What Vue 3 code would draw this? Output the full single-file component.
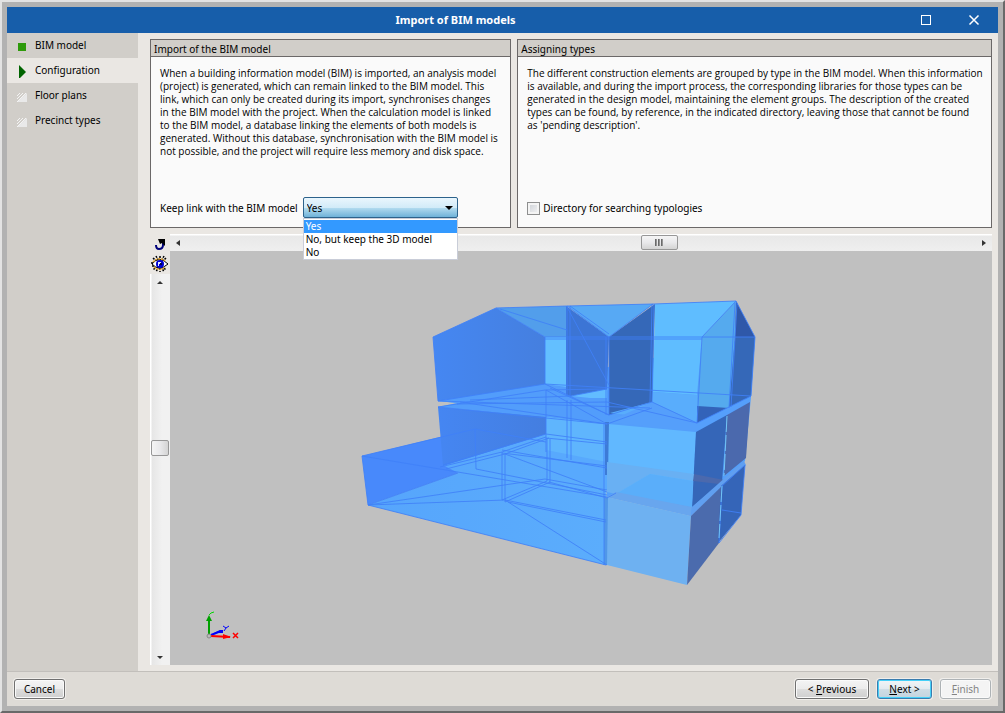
<script setup>
import { ref } from 'vue'

const steps = [
  { label: 'BIM model', state: 'done' },
  { label: 'Configuration', state: 'current' },
  { label: 'Floor plans', state: 'pending' },
  { label: 'Precinct types', state: 'pending' }
]
const importText = [
  'When a building information model (BIM) is imported, an analysis model',
  '(project) is generated, which can remain linked to the BIM model. This',
  'link, which can only be created during its import, synchronises changes',
  'in the BIM model with the project. When the calculation model is linked',
  'to the BIM model, a database linking the elements of both models is',
  'generated. Without this database, synchronisation with the BIM model is',
  'not possible, and the project will require less memory and disk space.'
]
const typesText = [
  'The different construction elements are grouped by type in the BIM model. When this information',
  'is available, and during the import process, the corresponding libraries for those types can be',
  'generated in the design model, maintaining the element groups. The description of the created',
  'types can be found, by reference, in the indicated directory, leaving those that cannot be found',
  "as 'pending description'."
]
const options = ['Yes', 'No, but keep the 3D model', 'No']
const link = ref('Yes')
const searchDirectory = ref(false)

const faces = [
  ['438,401 545,380 755,337 751,397 745,461 722,484 691,516 607,497 607,424 457,403', '#549ffb'],
  ['362,456 440,437 470,430 546,434 458,473 368,505', '#4889fb'],
  ['368,505 458,473 443,465 546,434 607,440 606,565', 'url(#ground)'],
  ['438,401 545,384 570,382 652,402 697,423 607,424 546,418 438,407 457,403', '#529dfb'],
  ['438,407 546,417 546,434 443,466', 'url(#wallMid)'],
  ['546,417 607,424 607,466 546,452', '#5fb5fd'],
  ['546,434 607,444 607,490 546,470', '#58a9fd'],
  ['546,417 607,424 607,462 546,450', '#5fb5fd'],
  ['433,337 496,308 545,337 545,384 438,401', 'url(#wallTop)'],
  ['496,308 567,306 567,337 545,337', '#529eeb'],
  ['545,337 567,337 567,387 545,384', '#63bfff'],
  ['566,306 609,337 607,389 571,396 566,395', '#3c75d5'],
  ['571,396 607,389 607,398 590,398', '#62bcff'],
  ['567,306 653,304 609,337', '#57a9f4'],
  ['609,337 655,304 652,402 609,415', '#3568b8'],
  ['655,304 736,301 702,337 697,395 653,392', '#5fbdff'],
  ['653,392 697,395 697,423 610,413 652,402', '#59adfc'],
  ['736,301 702,337 697,407 729,408 735,337', '#55aaee'],
  ['736,301 755,337 735,337', '#2f58a9'],
  ['735,337 755,337 751,396 729,408', '#3568b8'],
  ['697,406 729,408 697,423', '#3363b9'],
  ['607,422 652,402 697,423 745,399 750,402 696,432', '#559ffb'],
  ['608,424 696,432 692,507 607,490', '#61b8ff'],
  ['605,422 609,422 608,475 605,475', '#3d7bd6'],
  ['696,432 727,415 722,482 692,507', '#3566b8'],
  ['727,415 750,402 746,458 724,476', '#4b69ad'],
  ['607,462 694,474 694,481 650,474 616,494 607,492', '#69b0f3'],
  ['650,474 693,481 692,507 616,494', '#5aaefa'],
  ['607,497 616,492 692,507 691,516', '#68a6ee'],
  ['694,474 724,480 719,484 693,481', '#4b69ad'],
  ['692,507 744,461 746,465 691,516', '#609ff0'],
  ['607,497 691,516 687,585 607,565', '#6eb1f1'],
  ['604,498 608,497 607,565 604,564', '#5097e8'],
  ['691,516 722,486 719,543 687,585', '#4b6bad'],
  ['721,486 745,465 741,515 718,543', '#3565b8']
]
const edges = [
  '433,337 496,308 567,306 653,304 736,301 755,337 751,396 697,423 652,402',
  '433,337 438,401 545,384', '545,337 755,337', '496,308 545,337 545,384',
  '500,309 567,330', '567,306 567,396', '570,306 570,396',
  '567,306 609,337 653,304', '570,306 609,334', '567,307 609,385', '609,337 609,415',
  '606,337 606,415', '545,339 702,339', '736,301 702,337 697,423', '735,303 729,408',
  '737,303 731,407', '654,304 652,402', '652,304 650,402',
  '545,384 751,396', '545,384 609,415 652,402', '438,407 545,390 607,389',
  '438,401 650,408', '457,404 607,402 697,423', '470,400 571,396 607,389', '460,402 607,424',
  '438,407 546,418 607,424', '546,390 546,452', '567,400 567,458', '571,400 571,460',
  '546,390 607,424 652,408', '550,388 609,415',
  '443,465 546,434', '362,456 475,429 546,442', '362,456 368,505 606,565',
  '362,456 607,497', '368,505 545,479 607,490', '368,505 505,500 607,565',
  '368,505 458,473', '475,429 476,469', '440,467 502,452 546,437', '446,469 505,454 549,438',
  '502,452 502,500', '505,454 505,502', '547,438 547,481', '550,439 550,482',
  '502,500 547,481', '505,502 550,482', '505,500 606,520', '508,502 606,522',
  '502,450 607,468', '502,453 607,466', '476,469 607,495',
  '505,454 607,492', '549,482 607,498 616,493',
  '546,434 607,442', '546,438 607,444', '604,424 604,565',
  '722,486 745,465 741,515 719,543 722,486', '722,510 741,513'
]
</script>

<template>
  <div class="window">
    <header class="titlebar">
      <h1>Import of BIM models</h1>
      <div class="window-buttons">
        <button type="button" aria-label="Maximize">
          <svg width="12" height="12" viewBox="0 0 12 12"><rect x="1.5" y="1.5" width="9" height="9" fill="none" stroke="#fff" /></svg>
        </button>
        <button type="button" aria-label="Close">
          <svg width="12" height="12" viewBox="0 0 12 12"><path d="M1.5 1.5l9 9M10.5 1.5l-9 9" stroke="#fff" stroke-width="1.500" /></svg>
        </button>
      </div>
    </header>

    <div class="body">
      <nav class="steps">
        <a v-for="step in steps" :key="step.label" href="#" class="step" :class="step.state">
          <svg v-if="step.state === 'done'" width="12" height="14" viewBox="0 0 12 14"><path d="M2 4h8v8H2z" fill="#2e9a0a" /></svg>
          <svg v-else-if="step.state === 'current'" width="12" height="14" viewBox="0 0 12 14"><path d="M3 1l7 7-7 7z" fill="#006400" /></svg>
          <svg v-else width="12" height="14" viewBox="0 0 12 14">
            <path d="M11 4v9H1z" fill="#e9e9e9" />
            <path d="M1 7l3-3M1 10l6-6M1 13l9-9" stroke="#f4f4f4" />
          </svg>
          <span>{{ step.label }}</span>
        </a>
      </nav>

      <main class="content">
        <div class="panels">
          <section class="panel import-panel">
            <h2>Import of the BIM model</h2>
            <div class="panel-body">
              <p><span v-for="line in importText" :key="line">{{ line }}</span></p>
              <div class="field">
                <label for="keep-link">Keep link with the BIM model</label>
                <div class="combo">
                  <select id="keep-link" v-model="link">
                    <option v-for="o in options" :key="o">{{ o }}</option>
                  </select>
                  <svg class="caret" width="8" height="4" viewBox="0 0 8 4"><path d="M0 0h8L4 4z" fill="#000" /></svg>
                  <ul class="menu" role="listbox" aria-label="Keep link with the BIM model">
                    <li v-for="o in options" :key="o" role="option" :aria-selected="o === link" :class="{ selected: o === link }" @click="link = o">{{ o }}</li>
                  </ul>
                </div>
              </div>
            </div>
          </section>
          <section class="panel">
            <h2>Assigning types</h2>
            <div class="panel-body">
              <p><span v-for="line in typesText" :key="line">{{ line }}</span></p>
              <div class="field">
                <label class="check"><input v-model="searchDirectory" type="checkbox" />Directory for searching typologies</label>
              </div>
            </div>
          </section>
        </div>

        <div class="viewer">
          <div class="tools">
            <button type="button" aria-label="Rotate view">
              <svg width="14" height="13" viewBox="0 0 14 13">
                <path d="M10 5v2q0 4-4 4Q3 11 3 7" fill="none" stroke="#00007a" stroke-width="2" />
                <path d="M5 1h7v7L9 5 7 6z" fill="#000" />
              </svg>
            </button>
            <button type="button" aria-label="Visibility">
              <svg width="18" height="18" viewBox="0 0 18 18">
                <path d="M9 1v16M5 1l8 16M13 1L5 17M2 3l13 12M15 3L2 15M0 8h5M1 11h4" stroke="#000" stroke-width="1.500" stroke-dasharray="2 1" />
                <path d="M1 9q7-9 16 0q-9 8-16 0z" fill="#fff" stroke="#000" />
                <path d="M2 7q6-6 12-1M3 12q6 5 11 0" fill="none" stroke="#e4a329" stroke-width="1.500" stroke-dasharray="2 1" />
                <circle cx="9" cy="9" r="4" fill="#0000d0" /><path d="M7 7h3v2H8v2H7z" fill="#dfe6ff" /><path d="M9 8h2v2H9z" fill="#00004a" />
              </svg>
            </button>
            <div class="vscroll">
              <svg width="6" height="3" viewBox="0 0 6 3"><path d="M0 3h6L3 0z" fill="#333" /></svg>
              <span class="thumb"></span>
              <svg width="6" height="3" viewBox="0 0 6 3"><path d="M0 0h6L3 3z" fill="#333" /></svg>
            </div>
          </div>
          <div class="stage">
            <div class="hscroll">
              <svg width="4" height="6" viewBox="0 0 4 6"><path d="M4 0v6L0 3z" fill="#333" /></svg>
              <span class="thumb"><i></i><i></i><i></i></span>
              <svg width="4" height="6" viewBox="0 0 4 6"><path d="M0 0v6l4-3z" fill="#333" /></svg>
            </div>
            <svg class="scene" viewBox="170 251 822 414" role="img" aria-label="3D building model">
              <defs>
                <linearGradient id="wallTop"><stop offset="0" stop-color="#4587f2" /><stop offset="1" stop-color="#457fdf" /></linearGradient>
                <linearGradient id="wallMid"><stop offset="0" stop-color="#4586f2" /><stop offset="1" stop-color="#447ee0" /></linearGradient>
                <linearGradient id="ground"><stop offset="0" stop-color="#56a5fc" /><stop offset="1" stop-color="#5badfc" /></linearGradient>
              </defs>
              <polygon v-for="(f, i) in faces" :key="i" :points="f[0]" :fill="f[1]" />
              <polyline v-for="(e, i) in edges" :key="'e' + i" :points="e" fill="none" stroke="#3f80f8" stroke-opacity=".85" />
              <path d="M727 416l-3 60M722 486l-3 52" fill="none" stroke="#72c4f4" stroke-dasharray="16 3" />
              <g fill="none">
                <path d="M209 635v-16" stroke="#00a000" stroke-width="2" /><path d="M206 621l3-6 3 6z" fill="#00a000" />
                <path d="M209 615l2-2 3-1" stroke="#00d800" />
                <path d="M211 635l10-4" stroke="#00f" stroke-width="2" /><path d="M214 633l6-3h3v3z" fill="#00f" />
                <path d="M223 626l3 2 3-2M226 628l-2 3" stroke="#00f" />
                <path d="M211 636l19 1" stroke="#f00" stroke-width="2" /><path d="M223 634l8 3-8 2z" fill="#f00" />
                <path d="M233 633l5 5M238 633l-5 5" stroke="#f00" stroke-width="1.500" />
                <circle cx="209" cy="636" r="2" fill="#bbb" stroke="#888" />
              </g>
            </svg>
          </div>
        </div>
      </main>
    </div>

    <footer class="footer">
      <button type="button" class="btn cancel">Cancel</button>
      <button type="button" class="btn previous">&lt; <u>P</u>revious</button>
      <button type="button" class="btn next"><u>N</u>ext &gt;</button>
      <button type="button" class="btn finish" disabled><u>F</u>inish</button>
    </footer>
  </div>
</template>

<style>
html, body, #app { height: 100%; margin: 0; }
</style>

<style scoped>
* { box-sizing: border-box; }
.window {
  min-height: 100%;
  display: flex;
  flex-direction: column;
  padding: 5px;
  border: 2px solid #e3e3e3;
  border-right-color: #696969;
  border-bottom-color: #696969;
  background: #b2b2b2;
  color: #000;
  font: 10px/13px "Noto Sans", "Open Sans", sans-serif;
}
button, select, input { font: inherit; color: inherit; margin: 0; padding: 0; }
svg { display: block; flex: none; }
.titlebar {
  display: flex;
  align-items: center;
  height: 26px;
  background: #175eaa;
  color: #fff;
  padding-right: 18px;
}
.titlebar h1 { flex: 1; margin: 0 16px 0 0; font-size: 11px; line-height: 16px; font-weight: bold; text-align: center; }
.window-buttons { display: flex; gap: 36px; }
.window-buttons button, .tools button { border: 0; background: none; }
.body { flex: 1; display: flex; background: #eae7e3; }
.steps { width: 131px; flex: none; background: #d1cec9; }
.step {
  display: flex;
  gap: 7px;
  height: 25px;
  padding: 6px 9px;
  color: #000;
  text-decoration: none;
}
.step.current { background: #eae7e3; }
.content { flex: 1; min-width: 0; display: flex; flex-direction: column; padding: 6px 6px 6px 12px; }
.panels { display: flex; gap: 6px; }
.panel {
  flex: 475 1 0;
  min-width: 0;
  min-height: 189px;
  display: flex;
  flex-direction: column;
  border: 1px solid #6b6868;
  background: #fafafa;
}
.import-panel { flex-grow: 361; }
.panel h2 {
  margin: 0;
  padding: 3px 3px 0;
  height: 17px;
  font: inherit;
  background: #d1cec9;
  border-bottom: 1px solid #6b6868;
}
.panel-body { flex: 1; display: flex; flex-direction: column; justify-content: space-between; padding: 10px 9px 9px; }
.panel p { margin: 0; font-family: "Open Sans", "Noto Sans", sans-serif; }
.panel p span { display: block; white-space: nowrap; }
.field { display: flex; align-items: center; height: 21px; white-space: nowrap; }
.field > label { flex: none; padding-top: 2px; }
.combo { position: relative; width: 155px; margin-left: 5px; }
.combo select {
  appearance: none;
  display: block;
  width: 100%;
  height: 21px;
  padding: 2px 3px 0;
  border: 1px solid #2c628b;
  border-radius: 2px;
  background: linear-gradient(#eaf6fd 0%, #d2ebf8 50%, #b4dcf0 51%, #6fb2d8 100%);
  outline: 0;
}
.caret { position: absolute; right: 5px; top: 9px; }
.menu {
  position: absolute;
  z-index: 2;
  top: 21px;
  left: 0;
  right: 0;
  margin: 0;
  padding: 1px 0 0;
  list-style: none;
  background: #fff;
  border: 1px solid #c9cdd8;
}
.menu li { padding: 0 2px; }
.menu .selected { background: #3399ff; color: #fff; }
.check { display: flex; align-items: center; gap: 3px; }
.check input {
  appearance: none;
  width: 13px;
  height: 13px;
  border: 1px solid #8e8f8f;
  background: linear-gradient(135deg, #cbcfd5, #f6f6f6);
  box-shadow: inset 0 0 0 2px #f4f4f4;
}
.viewer { flex: 1; display: flex; margin-top: 6px; }
.tools { width: 20px; flex: none; display: flex; flex-direction: column; }
.tools button { height: 20px; display: flex; align-items: center; justify-content: center; }
.vscroll {
  flex: 1;
  display: flex;
  flex-direction: column;
  align-items: center;
  justify-content: space-between;
  padding: 7px 0 6px;
  background: linear-gradient(90deg, #fff 1px, #e6e6e6 2px, #f1f1f1 60%);
}
.thumb { border: 1px solid #979797; border-radius: 2px; background: linear-gradient(#f5f5f5, #e9e9eb 50%, #d4d4d4); }
.vscroll .thumb { width: 18px; height: 16px; margin-bottom: 44px; background: linear-gradient(90deg, #f5f5f5, #e9e9eb 50%, #d4d4d4); }
.stage { flex: 1; min-width: 0; display: flex; flex-direction: column; background: #c0c0c0; }
.hscroll {
  height: 17px;
  display: flex;
  align-items: center;
  justify-content: space-between;
  padding: 0 6px;
  background: linear-gradient(#fff 1px, #e8e8e8 2px, #efefef);
}
.hscroll .thumb { width: 37px; height: 15px; margin-left: 156px; display: flex; align-items: center; justify-content: center; gap: 1px; }
.thumb i { width: 2px; height: 7px; background: linear-gradient(90deg, #555, #aaa); }
.scene { flex: 1; width: 100%; min-height: 0; }
.footer {
  display: flex;
  align-items: center;
  gap: 8px;
  height: 35px;
  padding: 0 7px;
  background: #dedbd6;
  border-top: 1px solid #c2bfbb;
}
.btn {
  height: 20px;
  border: 1px solid #707070;
  border-radius: 3px;
  background: linear-gradient(#f4f4f4 0%, #ebebeb 50%, #dddddd 51%, #cfcfcf 100%);
  box-shadow: 0 0 0 1px #f0eeeb, inset 0 0 0 1px #fafafa;
}
.cancel { width: 51px; margin-right: auto; }
.previous { width: 74px; }
.next { width: 55px; border-color: #3a7cae; box-shadow: 0 0 0 1px #f0eeeb, inset 0 0 0 1px #45d0f8; background: linear-gradient(#f1f5f7 0%, #e2eaef 50%, #cfdde5 51%, #c2d4df 100%); }
.finish { width: 51px; border-color: #adb2b5; background: #f4f4f4; color: #838383; }
</style>
